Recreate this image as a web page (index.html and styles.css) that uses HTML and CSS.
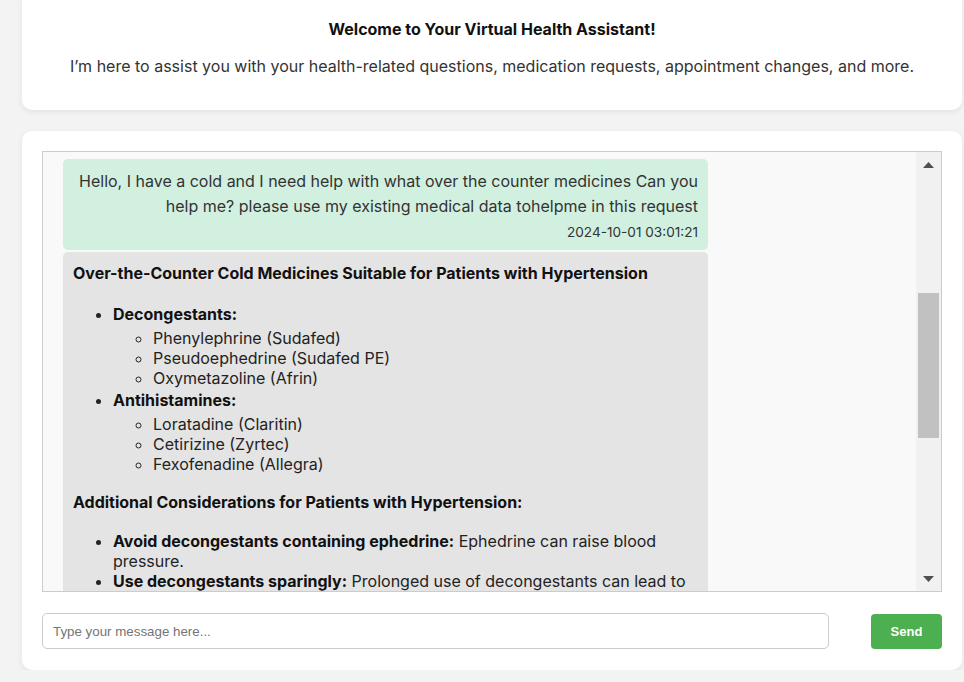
FILE: index.html
```html
<!DOCTYPE html>
<html lang="en">
<head>
<meta charset="utf-8">
<title>Virtual Health Assistant</title>
<link rel="stylesheet" href="styles.css">
</head>
<body>
<div class="page">
  <section class="card welcome">
    <h1 class="welcome-title">Welcome to Your Virtual Health Assistant!</h1>
    <p class="welcome-text">I’m here to assist you with your health-related questions, medication requests, appointment changes, and more.</p>
  </section>

  <section class="card chat">
    <div class="chat-box">
      <div class="messages">
        <div class="msg msg-user">
          <p class="msg-text">Hello, I have a cold and I need help with what over the counter medicines Can you help me? please use my existing medical data tohelpme in this request</p>
          <div class="msg-time">2024-10-01 03:01:21</div>
        </div>
        <div class="msg msg-bot">
          <p class="bot-head"><strong>Over-the-Counter Cold Medicines Suitable for Patients with Hypertension</strong></p>
          <ul class="bot-list">
            <li><strong>Decongestants:</strong>
              <ul class="sub-list">
                <li>Phenylephrine (Sudafed)</li>
                <li>Pseudoephedrine (Sudafed PE)</li>
                <li>Oxymetazoline (Afrin)</li>
              </ul>
            </li>
            <li class="li-second"><strong>Antihistamines:</strong>
              <ul class="sub-list">
                <li>Loratadine (Claritin)</li>
                <li>Cetirizine (Zyrtec)</li>
                <li>Fexofenadine (Allegra)</li>
              </ul>
            </li>
          </ul>
          <p class="bot-head"><strong>Additional Considerations for Patients with Hypertension:</strong></p>
          <ul class="bot-list plain">
            <li><strong>Avoid decongestants containing ephedrine:</strong> Ephedrine can raise blood pressure.</li>
            <li><strong>Use decongestants sparingly:</strong> Prolonged use of decongestants can lead to rebound congestion.</li>
          </ul>
        </div>
      </div>
      <div class="scrollbar">
        <div class="sb-btn">
          <svg width="11" height="6" viewBox="0 0 11 6"><path d="M5.5 0 L11 6 L0 6 Z" fill="#505050"/></svg>
        </div>
        <div class="sb-track">
          <div class="sb-thumb"></div>
        </div>
        <div class="sb-btn">
          <svg width="11" height="6" viewBox="0 0 11 6"><path d="M0 0 L11 0 L5.5 6 Z" fill="#505050"/></svg>
        </div>
      </div>
    </div>
    <div class="input-row">
      <input class="msg-input" type="text" placeholder="Type your message here...">
      <button class="send-btn" type="button">Send</button>
    </div>
  </section>
</div>
</body>
</html>
```

FILE: styles.css
```css
* { box-sizing: border-box; }

html, body {
  margin: 0;
  padding: 0;
  background: #f3f3f3;
  overflow: hidden;
}

body {
  font-family: Inter, "Noto Sans", "Liberation Sans", sans-serif;
  color: #333;
}

.page {
  padding: 0 0 0 22px;
  display: flex;
  flex-direction: column;
  gap: 21px;
}

.card {
  width: 940px;
  background: #fff;
  border-radius: 10px;
  box-shadow: 0 2px 6px rgba(0, 0, 0, 0.07);
}

.welcome {
  margin-top: -10px;
  padding: 29px 20px 32px;
  text-align: center;
}

.welcome-title {
  margin: 0 0 15px;
  font-size: 16px;
  line-height: 20px;
  font-weight: 700;
  color: #111;
}

.welcome-text {
  margin: 0;
  font-size: 16px;
  line-height: 24px;
  color: #333;
}

.chat {
  padding: 20px 20px 21px;
}

.chat-box {
  height: 441px;
  border: 1px solid #ccc;
  background: #f9f9f9;
  display: flex;
}

.messages {
  flex: 1;
  overflow: hidden;
  padding: 7px 20px 0;
  display: flex;
  flex-direction: column;
  gap: 2px;
}

.msg {
  width: 645px;
  border-radius: 5px;
  padding: 10px;
  font-size: 16px;
  flex-shrink: 0;
}

.msg-user {
  background: #d2f0e0;
  text-align: right;
  padding-bottom: 9px;
}

.msg-text {
  margin: 0;
  line-height: 25px;
  color: #333;
}

.msg-time {
  margin-top: 4px;
  font-size: 13.6px;
  line-height: 18px;
  color: #333;
}

.msg-bot {
  background: #e4e4e4;
  color: #222;
  line-height: 20px;
  padding-top: 11px;
}

.bot-head {
  margin: 0 0 21px;
  color: #111;
}

.bot-list {
  margin: 0 0 18px;
  padding-left: 40px;
  list-style: disc;
}

.bot-list.plain {
  margin-top: -2px;
}

.bot-list strong { color: #111; }

.li-second { margin-top: 2px; }

.sub-list {
  margin: 4px 0 0;
  padding-left: 40px;
  list-style: circle;
}

.scrollbar {
  width: 25px;
  flex-shrink: 0;
  background: #f1f1f1;
  display: flex;
  flex-direction: column;
}

.sb-btn {
  height: 25px;
  display: flex;
  align-items: center;
  justify-content: center;
}

.sb-track {
  flex: 1;
  padding: 116px 2px 0;
}

.sb-thumb {
  height: 145px;
  background: #c1c1c1;
}

.input-row {
  margin-top: 21px;
  display: flex;
  align-items: center;
  justify-content: space-between;
}

.msg-input {
  width: 787px;
  height: 36px;
  border: 1px solid #ccc;
  border-radius: 5px;
  padding: 0 10px;
  font-family: "Liberation Sans", Arial, sans-serif;
  font-size: 13.33px;
  color: #333;
  background: #fff;
  outline: none;
}

.msg-input::placeholder { color: #757575; }

.send-btn {
  width: 71px;
  height: 35px;
  border: none;
  border-radius: 4px;
  background: #4caf50;
  color: #fff;
  font-family: "Liberation Sans", Arial, sans-serif;
  font-size: 13px;
  font-weight: 700;
  cursor: pointer;
}
```
